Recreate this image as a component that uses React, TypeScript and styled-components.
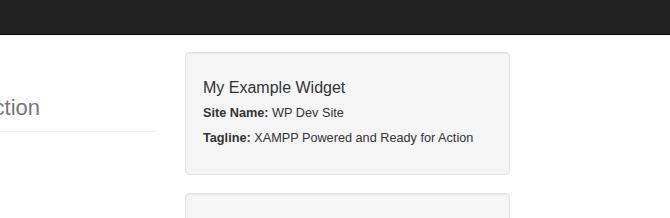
import React from "react";
import styled, { createGlobalStyle } from "styled-components";

const GlobalStyle = createGlobalStyle`
  html, body {
    margin: 0;
    padding: 0;
    background: #ffffff;
    font-family: "Liberation Sans", Arial, sans-serif;
    color: #333333;
    overflow: hidden;
  }
`;

const S = {
  Navbar: styled.div`
    height: 34px;
    background: #222222;
    border-bottom: 1px solid #080808;
  `,
  Page: styled.div`
    display: flex;
    align-items: flex-start;
    gap: 28px;
    padding-top: 17px;
  `,
  Side: styled.div`
    flex: 0 0 157px;
    min-width: 0;
    padding-top: 44px;
  `,
  PageTitle: styled.h1`
    display: flex;
    justify-content: flex-end;
    margin: 0;
    padding: 0 117px 11px 0;
    font-size: 22px;
    font-weight: 400;
    line-height: 1.1;
    color: #777777;
    white-space: nowrap;
    border-bottom: 1px solid #eeeeee;
  `,
  Main: styled.div`
    flex: 0 0 325px;
    display: flex;
    flex-direction: column;
    gap: 18px;
  `,
  Well: styled.div<{ $empty?: boolean }>`
    box-sizing: border-box;
    min-height: ${(p) => (p.$empty ? "60px" : "0")};
    padding: 19px 17px 9px 17px;
    background: #f5f5f5;
    border: 1px solid #e3e3e3;
    border-radius: 4px;
    box-shadow: inset 0 1px 1px rgba(0, 0, 0, 0.05);
  `,
  WidgetTitle: styled.h3`
    margin: 7px 0 7px;
    font-size: 16px;
    font-weight: 400;
    line-height: 1.1;
    color: #333333;
  `,
  Line: styled.p`
    margin: 0 0 7px;
    font-size: 12.7px;
    line-height: 18px;
    color: #333333;
    &:last-child {
      margin-bottom: 18px;
    }
    & > b {
      font-weight: 700;
    }
  `,
};

const App = () => {
  return (
    <>
      <GlobalStyle />
      <S.Navbar />
      <S.Page>
        <S.Side>
          <S.PageTitle>
            <span>XAMPP Powered and Ready for Action</span>
          </S.PageTitle>
        </S.Side>
        <S.Main>
          <S.Well>
            <S.WidgetTitle>My Example Widget</S.WidgetTitle>
            <S.Line>
              <b>Site Name:</b> WP Dev Site
            </S.Line>
            <S.Line>
              <b>Tagline:</b> XAMPP Powered and Ready for Action
            </S.Line>
          </S.Well>
          <S.Well $empty />
        </S.Main>
      </S.Page>
    </>
  );
};

export default App;
